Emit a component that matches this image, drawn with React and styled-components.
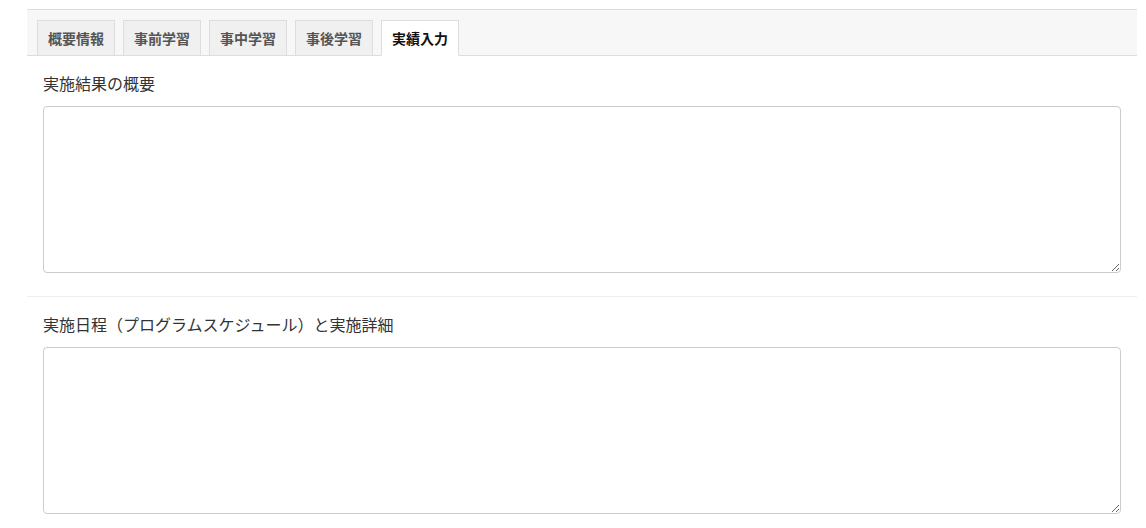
import React from "react";
import styled, { createGlobalStyle } from "styled-components";

const Global = createGlobalStyle`
  html, body { margin: 0; padding: 0; background: #fff; }
  body { font-family: "Noto Sans CJK JP", "Noto Sans", sans-serif; color: #333; }
  * { box-sizing: border-box; }
`;

const Page = styled.div`
  padding: 9px 9px 0 27px;
`;

const TabBar = styled.div`
  display: flex;
  align-items: flex-end;
  gap: 8px;
  height: 47px;
  padding: 0 10px;
  background: #f7f7f7;
  border-top: 1px solid #ddd;
  border-bottom: 1px solid #ddd;
`;

const Tab = styled.div`
  width: 78px;
  height: 36px;
  margin-bottom: -1px;
  display: flex;
  align-items: center;
  justify-content: center;
  font-size: 14px;
  font-weight: bold;
  color: ${(p) => (p.$active ? "#111" : "#555")};
  background: ${(p) => (p.$active ? "#fff" : "#f0f0f0")};
  border: 1px solid #ddd;
  border-bottom-color: ${(p) => (p.$active ? "#fff" : "#ddd")};
`;

const Section = styled.div`
  padding: 15px 16px 23px;
  border-bottom: ${(p) => (p.$last ? "none" : "1px solid #eee")};
`;

const Label = styled.div`
  font-size: 16px;
  line-height: 24px;
  color: #333;
  margin-bottom: 11px;
`;

const TextArea = styled.textarea`
  display: block;
  width: 100%;
  height: 167px;
  border: 1px solid #ccc;
  border-radius: 4px;
  padding: 6px 12px;
  font-family: inherit;
  font-size: 14px;
  resize: vertical;
  outline: none;
  background: #fff;
`;

const tabs = ["概要情報", "事前学習", "事中学習", "事後学習", "実績入力"];

export default function App() {
  return (
    <>
      <Global />
      <Page>
        <TabBar>
          {tabs.map((t, i) => (
            <Tab key={t} $active={i === 4}>
              {t}
            </Tab>
          ))}
        </TabBar>
        <Section>
          <Label>実施結果の概要</Label>
          <TextArea />
        </Section>
        <Section $last>
          <Label>実施日程（プログラムスケジュール）と実施詳細</Label>
          <TextArea />
        </Section>
      </Page>
    </>
  );
}
